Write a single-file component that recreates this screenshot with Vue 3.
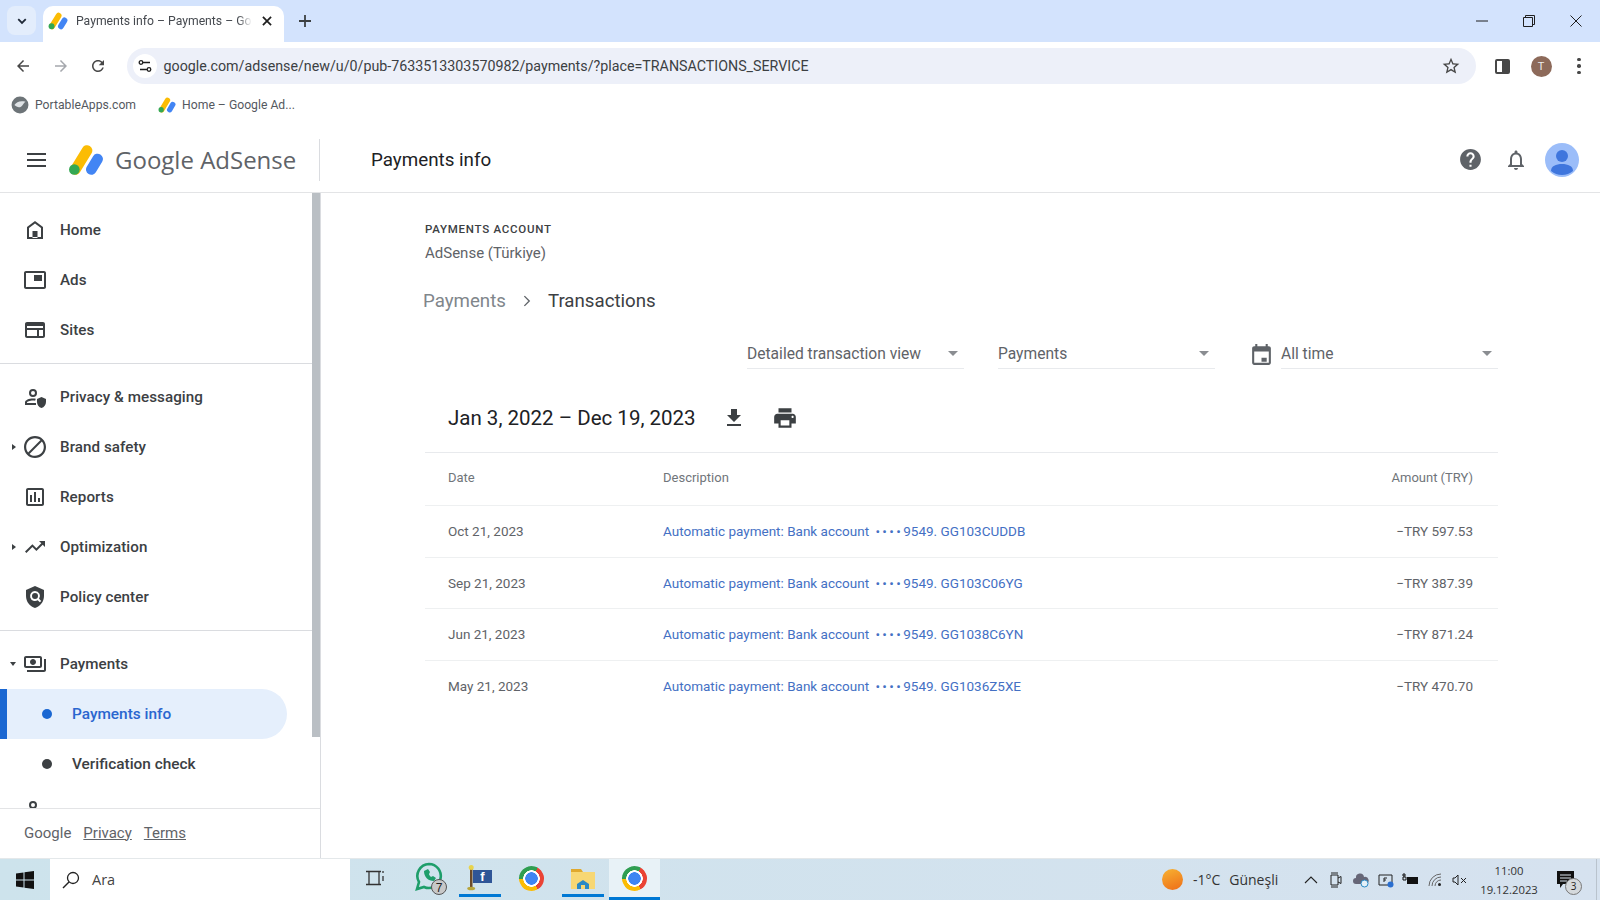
<script setup>
const icons = {
  home: 'M12 3 4 9v12h16V9l-8-6zm6 16H6v-9l6-4.5 6 4.5v9zM9.500 13h5v7h-5z',
  ads: 'M21 3H3c-1.1 0-2 .9-2 2v14c0 1.1.9 2 2 2h18c1.1 0 2-.9 2-2V5c0-1.1-.9-2-2-2zm0 16H3V5h18v14zM11 7h8v6h-8V7z',
  sites: 'M20 4H4c-1.1 0-2 .9-2 2v12c0 1.1.9 2 2 2h16c1.1 0 2-.9 2-2V6c0-1.1-.9-2-2-2zM4 18v-6h10v6H4zm12 0v-6h4v6h-4zM4 10V8h16v2H4z',
  privacy: 'M10 4a4 4 0 1 0 0 8 4 4 0 0 0 0-8zm0 2a2 2 0 1 1 0 4 2 2 0 0 1 0-4zM2 20v-2.5C2 15 6 13.5 10 13.5c1 0 1.900.1 2.800.3l-.7 1.900C11.400 15.600 10.700 15.500 10 15.500c-3.300 0-6 1.100-6 2v.5h9v2H2zM18.500 12l-4.500 2v3c0 2.800 1.900 5.300 4.500 6 2.600-.7 4.500-3.200 4.500-6v-3l-4.500-2z',
  block: 'M12 1C5.900 1 1 5.900 1 12s4.900 11 11 11 11-4.900 11-11S18.100 1 12 1zM3.200 12c0-4.900 3.900-8.800 8.800-8.800 2.100 0 4 .7 5.500 1.900L5.100 17.500C3.900 16 3.200 14.100 3.200 12zm8.800 8.800c-2.100 0-4-.7-5.500-1.900L18.900 6.500c1.200 1.500 1.900 3.400 1.900 5.500 0 4.900-3.900 8.800-8.800 8.800z',
  reports: 'M19 3H5c-1.100 0-2 .9-2 2v14c0 1.100.9 2 2 2h14c1.100 0 2-.9 2-2V5c0-1.100-.9-2-2-2zm0 16H5V5h14v14zM7 10h2v7H7v-7zm4-3h2v10h-2V7zm4 6h2v4h-2v-4z',
  trend: 'M16 6l2.290 2.290-4.880 4.880-4-4L2 16.590 3.410 18l6-6 4 4 6.300-6.290L22 12V6z',
  policy: 'M12 1 3 5v6c0 5.550 3.840 10.740 9 12 5.160-1.260 9-6.450 9-12V5l-9-4zm0 5a5 5 0 0 1 4.100 7.860l2.100 2.100-1.400 1.400-2.100-2.100A5 5 0 1 1 12 6zm0 2a3 3 0 1 0 0 6 3 3 0 0 0 0-6z',
  payments: 'M19 14V6c0-1.100-.9-2-2-2H3c-1.100 0-2 .9-2 2v8c0 1.100.9 2 2 2h14c1.100 0 2-.9 2-2zm-2 0H3V6h14v8zm-7-7c-1.660 0-3 1.340-3 3s1.340 3 3 3 3-1.340 3-3-1.340-3-3-3zm13 0v11c0 1.100-.9 2-2 2H4v-2h17V7h2z',
}

const navGroups = [
  [
    { label: 'Home', icon: 'home' },
    { label: 'Ads', icon: 'ads' },
    { label: 'Sites', icon: 'sites' },
  ],
  [
    { label: 'Privacy & messaging', icon: 'privacy' },
    { label: 'Brand safety', icon: 'block', arrow: 'right' },
    { label: 'Reports', icon: 'reports' },
    { label: 'Optimization', icon: 'trend', arrow: 'right' },
    { label: 'Policy center', icon: 'policy' },
  ],
]

const transactions = [
  { date: 'Oct 21, 2023', ref: 'GG103CUDDB', amount: '597.53' },
  { date: 'Sep 21, 2023', ref: 'GG103C06YG', amount: '387.39' },
  { date: 'Jun 21, 2023', ref: 'GG1038C6YN', amount: '871.24' },
  { date: 'May 21, 2023', ref: 'GG1036Z5XE', amount: '470.70' },
]
</script>

<template>
  <div class="page">
    <div class="tabstrip">
      <div class="tab-search">
        <svg viewBox="0 0 24 24" width="18" height="18"><path d="M7 9.500 12 14.500 17 9.500" fill="none" stroke="#1f2937" stroke-width="2.400" /></svg>
      </div>
      <div class="tab">
        <svg viewBox="0 0 34 30" width="20" height="18">
          <line x1="7" y1="24" x2="18" y2="6" stroke="#fbbc04" stroke-width="10" stroke-linecap="round" />
          <line x1="22" y1="24" x2="28" y2="14" stroke="#4285f4" stroke-width="10" stroke-linecap="round" />
          <circle cx="6" cy="24" r="5" fill="#34a853" />
        </svg>
        <span class="tab-title">Payments info – Payments – Go</span>
        <svg viewBox="0 0 24 24" width="14" height="14"><path d="M5 5 19 19M19 5 5 19" stroke="#1f1f1f" stroke-width="3" /></svg>
      </div>
      <svg class="new-tab" viewBox="0 0 24 24" width="18" height="18"><path d="M12 4v16M4 12h16" stroke="#3c4043" stroke-width="2.400" /></svg>
      <div class="window-btns">
        <svg viewBox="0 0 12 12" width="12" height="12"><path d="M0 6h12" stroke="#1f1f1f" /></svg>
        <svg viewBox="0 0 12 12" width="12" height="12"><path d="M.5 2.500h9v9h-9zM2.500 2.500v-2h9v9h-2" fill="none" stroke="#1f1f1f" /></svg>
        <svg viewBox="0 0 12 12" width="12" height="12"><path d="M.5.5l11 11M11.500.5l-11 11" stroke="#1f1f1f" /></svg>
      </div>
    </div>

    <div class="toolbar">
      <svg viewBox="0 0 24 24" width="18" height="18"><path fill="#474747" d="M20 11H7.830l5.590-5.590L12 4l-8 8 8 8 1.410-1.410L7.830 13H20v-2z" /></svg>
      <svg viewBox="0 0 24 24" width="18" height="18"><path fill="#a5a8ad" d="M4 11h12.170l-5.590-5.590L12 4l8 8-8 8-1.410-1.410L16.170 13H4v-2z" /></svg>
      <svg viewBox="0 0 24 24" width="18" height="18"><path fill="#474747" d="M17.650 6.350C16.200 4.900 14.210 4 12 4c-4.420 0-7.990 3.580-7.990 8s3.570 8 7.990 8c3.730 0 6.840-2.550 7.730-6h-2.080c-.82 2.330-3.040 4-5.650 4-3.310 0-6-2.690-6-6s2.690-6 6-6c1.660 0 3.140.69 4.220 1.780L13 11h7V4l-2.350 2.350z" /></svg>
      <div class="omnibox">
        <div class="site-info">
          <svg viewBox="0 0 16 16" width="16" height="16"><path d="M3 4.500h10M3 11.500h10" stroke="#1f1f1f" stroke-width="1.500" /><circle cx="4" cy="4.500" r="1.800" fill="#fff" stroke="#1f1f1f" stroke-width="1.300" /><circle cx="12" cy="11.500" r="1.800" fill="#fff" stroke="#1f1f1f" stroke-width="1.300" /></svg>
        </div>
        <span class="url">google.com/adsense/new/u/0/pub-7633513303570982/payments/?place=TRANSACTIONS_SERVICE</span>
        <svg viewBox="0 0 24 24" width="20" height="20"><path fill="#474747" d="M22 9.240l-7.190-.62L12 2 9.190 8.630 2 9.240l5.460 4.730L5.820 21 12 17.270 18.180 21l-1.630-7.030L22 9.240zM12 15.400l-3.760 2.270 1-4.280-3.320-2.880 4.380-.38L12 6.100l1.710 4.040 4.380.38-3.320 2.880 1 4.280L12 15.400z" /></svg>
      </div>
      <div class="side-panel"><span></span></div>
      <div class="profile">T</div>
      <div class="dots"><i></i><i></i><i></i></div>
    </div>

    <div class="bookmarks">
      <div class="bookmark">
        <svg viewBox="0 0 16 16" width="18" height="18"><circle cx="8" cy="8" r="7.500" fill="#6d7478" /><path d="M3 8c2-3 5-4 10-3-2 1-3 5-6 5-1 0-3-1-4-2z" fill="#dfe3e6" /></svg>
        <span>PortableApps.com</span>
      </div>
      <div class="bookmark">
        <svg viewBox="0 0 34 30" width="18" height="16">
          <line x1="7" y1="24" x2="18" y2="6" stroke="#fbbc04" stroke-width="10" stroke-linecap="round" />
          <line x1="22" y1="24" x2="28" y2="14" stroke="#4285f4" stroke-width="10" stroke-linecap="round" />
          <circle cx="6" cy="24" r="5" fill="#34a853" />
        </svg>
        <span>Home – Google Ad...</span>
      </div>
    </div>

    <header class="app-header">
      <div class="brand">
        <div class="hamburger"><i></i><i></i><i></i></div>
        <svg viewBox="0 0 34 30" width="36" height="32">
          <line x1="7" y1="24" x2="18" y2="6" stroke="#fbbc04" stroke-width="10" stroke-linecap="round" />
          <line x1="22" y1="24" x2="28" y2="14" stroke="#4285f4" stroke-width="10" stroke-linecap="round" />
          <circle cx="6" cy="24" r="5" fill="#34a853" />
        </svg>
        <span class="brand-name">Google AdSense</span>
      </div>
      <h1 class="page-title">Payments info</h1>
      <div class="header-actions">
        <svg viewBox="0 0 24 24" width="25" height="25"><path fill="#5f6368" d="M12 2C6.480 2 2 6.480 2 12s4.480 10 10 10 10-4.480 10-10S17.520 2 12 2zm1 17h-2v-2h2v2zm2.070-7.750l-.9.920C13.450 12.900 13 13.500 13 15h-2v-.5c0-1.100.45-2.100 1.170-2.830l1.240-1.260c.37-.36.59-.86.59-1.410 0-1.100-.9-2-2-2s-2 .9-2 2H8c0-2.210 1.790-4 4-4s4 1.790 4 4c0 .88-.36 1.680-.93 2.250z" /></svg>
        <svg viewBox="0 0 24 24" width="24" height="24"><path fill="#5f6368" d="M12 22c1.100 0 2-.9 2-2h-4c0 1.100.9 2 2 2zm6-6v-5c0-3.070-1.630-5.640-4.500-6.320V4c0-.83-.67-1.500-1.500-1.500s-1.500.67-1.500 1.500v.68C7.640 5.360 6 7.920 6 11v5l-2 2v1h16v-1l-2-2zm-2 1H8v-6c0-2.480 1.510-4.500 4-4.500s4 2.020 4 4.500v6z" /></svg>
        <svg class="avatar" viewBox="0 0 34 34" width="34" height="34">
          <circle cx="17" cy="17" r="17" fill="#9bbdf9" />
          <circle cx="17" cy="13" r="6" fill="#3f76dd" />
          <path d="M6 28c0-5 5-7 11-7s11 2 11 7a17 17 0 0 1-22 0z" fill="#3f76dd" />
        </svg>
      </div>
    </header>

    <div class="body">
      <aside class="sidebar">
        <div class="nav-wrap">
          <nav class="nav">
            <div v-for="(group, i) in navGroups" :key="i" class="nav-group">
              <div v-for="item in group" :key="item.label" class="nav-item">
                <span v-if="item.arrow" class="caret-right"></span>
                <svg viewBox="0 0 24 24" width="24" height="24"><path fill="#3c4043" :d="icons[item.icon]" /></svg>
                <span>{{ item.label }}</span>
              </div>
            </div>
            <div class="nav-group last">
              <div class="nav-item">
                <span class="caret-down"></span>
                <svg viewBox="0 0 24 24" width="24" height="24"><path fill="#3c4043" :d="icons.payments" /></svg>
                <span>Payments</span>
              </div>
              <div class="nav-sub active"><i></i><span>Payments info</span></div>
              <div class="nav-sub"><i></i><span>Verification check</span></div>
              <div class="nav-item clipped">
                <svg viewBox="0 0 24 24" width="24" height="24"><circle cx="10" cy="8" r="3" fill="none" stroke="#3c4043" stroke-width="2" /></svg>
              </div>
            </div>
          </nav>
          <div class="scroll-track"><div class="scroll-thumb"></div></div>
        </div>
        <footer class="side-footer">
          <span>Google</span>
          <a>Privacy</a>
          <a>Terms</a>
        </footer>
      </aside>

      <main class="main">
        <div class="account-label">PAYMENTS ACCOUNT</div>
        <div class="account-name">AdSense (Türkiye)</div>
        <div class="crumbs">
          <span class="crumb-parent">Payments</span>
          <svg viewBox="0 0 24 24" width="18" height="18"><path d="M8.500 5.500 15 12l-6.500 6.500" fill="none" stroke="#5f6368" stroke-width="1.800" /></svg>
          <span class="crumb-current">Transactions</span>
        </div>
        <div class="filters">
          <div class="select"><span>Detailed transaction view</span><i class="select-caret"></i></div>
          <div class="select"><span>Payments</span><i class="select-caret"></i></div>
          <div class="date-filter">
            <svg viewBox="0 0 24 24" width="25" height="25"><path fill="#5f6368" d="M19 4h-1V2h-2v2H8V2H6v2H5c-1.100 0-2 .9-2 2v14c0 1.100.9 2 2 2h14c1.100 0 2-.9 2-2V6c0-1.100-.9-2-2-2zm0 16H5V9h14v11zm-2-5h-5v4h5z" /></svg>
            <div class="select"><span>All time</span><i class="select-caret"></i></div>
          </div>
        </div>
        <div class="range">
          <h2>Jan 3, 2022 – Dec 19, 2023</h2>
          <svg viewBox="0 0 24 24" width="24" height="24"><path fill="#3c4043" d="M19 9h-4V3H9v6H5l7 7 7-7zM5 18v2h14v-2H5z" /></svg>
          <svg viewBox="0 0 24 24" width="26" height="26"><path fill="#3c4043" d="M19 8H5c-1.660 0-3 1.340-3 3v6h4v4h12v-4h4v-6c0-1.660-1.340-3-3-3zm-3 11H8v-5h8v5zm3-7c-.55 0-1-.45-1-1s.45-1 1-1 1 .45 1 1-.45 1-1 1zm-1-9H6v4h12V3z" /></svg>
        </div>
        <div class="table">
          <div class="row head">
            <span>Date</span>
            <span>Description</span>
            <span class="amount">Amount (TRY)</span>
          </div>
          <div v-for="t in transactions" :key="t.ref" class="row">
            <span>{{ t.date }}</span>
            <a class="desc">Automatic payment: Bank account <b>••••</b>9549. {{ t.ref }}</a>
            <span class="amount">−TRY {{ t.amount }}</span>
          </div>
        </div>
      </main>
    </div>

    <div class="taskbar">
      <div class="start">
        <svg viewBox="0 0 18 18" width="18" height="18"><path fill="#111" d="M0 2.500 7.500 1.500v7H0zM8.500 1.300 18 0v8.500H8.500zM0 9.500h7.500v7L0 15.500zM8.500 9.500H18V18l-9.500-1.300z" /></svg>
      </div>
      <div class="search">
        <svg viewBox="0 0 20 20" width="20" height="20"><circle cx="12" cy="8" r="5.500" fill="none" stroke="#222" stroke-width="1.300" /><path d="M8 12 2 18" stroke="#222" stroke-width="1.500" /></svg>
        <span>Ara</span>
      </div>
      <div class="task-icons">
        <div class="task view">
          <svg viewBox="0 0 20 20" width="20" height="20"><path d="M4 3.500h10v13H4zM1 3.500h15M1 16.500h15M18 3v2M18 8v5" fill="none" stroke="#333" stroke-width="1.300" /></svg>
        </div>
        <div class="task chat">
          <svg viewBox="0 0 34 34" width="34" height="34">
            <path d="M15 3a12 12 0 0 0-10 18l-2 7 7-2a12 12 0 1 0 5-23z" fill="none" stroke="#1e9e6a" stroke-width="2.600" />
            <path d="M10 10c0 6 4 10 10 10l2-3-3-2-2 1c-1-1-2-2-2-3l1-2-2-3z" fill="#1e9e6a" />
            <circle cx="25" cy="26" r="7.500" fill="#c8c8c8" stroke="#555" />
            <text x="25" y="30.500" class="badge-num">7</text>
          </svg>
        </div>
        <div class="task running">
          <svg viewBox="0 0 26 28" width="26" height="28">
            <rect x="3" y="3" width="2.500" height="21" fill="#6b4a2a" />
            <circle cx="4.200" cy="3.500" r="2.500" fill="#e8d44d" />
            <ellipse cx="4.200" cy="24.500" rx="4" ry="1.800" fill="#b7a53a" />
            <rect x="6" y="6" width="19" height="13" fill="#2f5597" />
            <text x="15.500" y="17" class="flag-f">f</text>
          </svg>
        </div>
        <div class="task"><div class="chrome"></div></div>
        <div class="task running">
          <svg viewBox="0 0 26 24" width="26" height="24">
            <path d="M1 3h10l2 3H1z" fill="#e0a92e" />
            <rect x="1" y="6" width="24" height="17" fill="#f7d774" />
            <path d="M7 23v-5l6-4 6 4v5z" fill="#2a8ac6" />
            <rect x="11" y="19" width="4" height="4" fill="#f7d774" />
          </svg>
        </div>
        <div class="task running current"><div class="chrome"></div></div>
      </div>
      <div class="tray">
        <div class="weather"></div>
        <span class="temp">-1°C</span>
        <span class="temp name">Güneşli</span>
        <div class="tray-icons">
          <svg viewBox="0 0 16 16" width="16" height="16"><path d="M2 11 8 5l6 6" fill="none" stroke="#222" stroke-width="1.100" /></svg>
          <svg viewBox="0 0 16 16" width="16" height="16"><path d="M3 3h7v10H3zM10 6l3-1.500v7L10 10M3 1h7M3 15h7" fill="none" stroke="#222" /></svg>
          <svg viewBox="0 0 16 16" width="16" height="16"><path d="M3 12a3 3 0 0 1 0-6 4 4 0 0 1 8-1 3.500 3.500 0 0 1 2 7z" fill="#667" /><circle cx="11.500" cy="11.500" r="3.500" fill="#e4f0f8" stroke="#2a8ac6" /></svg>
          <svg viewBox="0 0 16 16" width="16" height="16"><path d="M1 3h13v10H1z" fill="none" stroke="#222" /><path d="M6 10V6h3M6 8h2" fill="none" stroke="#222" /><circle cx="12.500" cy="12.500" r="3" fill="#2a6fd0" /></svg>
          <svg viewBox="0 0 16 16" width="16" height="16"><path d="M5 5h11v7H5z" fill="#111" /><path d="M0 3h4M2 1v4M1 5h3v3H1z" fill="none" stroke="#111" /></svg>
          <svg viewBox="0 0 16 16" width="16" height="16"><path d="M2 14A12 12 0 0 1 14 2M5 14a9 9 0 0 1 9-9M8 14a6 6 0 0 1 6-6" fill="none" stroke="#666" /><circle cx="12.500" cy="12.500" r="1.500" fill="#222" /></svg>
          <svg viewBox="0 0 16 16" width="16" height="16"><path d="M1 6h2l3-3v10l-3-3H1zM9 6l5 5M14 6l-5 5" fill="none" stroke="#222" /></svg>
        </div>
        <div class="clock"><span>11:00</span><span>19.12.2023</span></div>
        <div class="notif">
          <svg viewBox="0 0 18 18" width="18" height="18"><path d="M0 0h17v13H6l-3 4v-4H0z" fill="#111" /><path d="M3 4h11M3 7h11M3 10h7" stroke="#dbe5ef" /></svg>
          <span class="notif-badge">3</span>
        </div>
      </div>
    </div>
  </div>
</template>

<style scoped>
.page {
  width: 1600px;
  height: 900px;
  display: flex;
  flex-direction: column;
  overflow: hidden;
  background: #fff;
  font-family: Roboto, "Liberation Sans", sans-serif;
  color: #3c4043;
}

/* browser chrome */
.tabstrip {
  height: 42px;
  flex: none;
  display: flex;
  align-items: flex-end;
  background: #d3e3fd;
}
.tab-search {
  width: 29px;
  height: 29px;
  margin: 0 7px 7px;
  border-radius: 8px;
  background: #e3edfc;
  display: flex;
  align-items: center;
  justify-content: center;
}
.tab {
  width: 241px;
  height: 36px;
  box-sizing: border-box;
  padding: 0 10px 6px 5px;
  display: flex;
  align-items: center;
  gap: 8px;
  background: #fff;
  border-radius: 10px 10px 0 0;
}
.tab-title {
  flex: 1;
  min-width: 0;
  white-space: nowrap;
  font-size: 12.2px;
  color: #45494f;
  -webkit-mask-image: linear-gradient(90deg, #000 92%, transparent);
  mask-image: linear-gradient(90deg, #000 92%, transparent);
}
.new-tab {
  margin: 0 0 12px 12px;
}
.window-btns {
  margin-left: auto;
  height: 42px;
  padding-right: 18px;
  display: flex;
  align-items: center;
  gap: 35px;
}
.toolbar {
  height: 48px;
  flex: none;
  box-sizing: border-box;
  padding-left: 14px;
  display: flex;
  align-items: center;
  gap: 19.5px;
}
.omnibox {
  width: 1349px;
  height: 36px;
  flex: none;
  box-sizing: border-box;
  padding: 0 15px 0 6px;
  display: flex;
  align-items: center;
  background: #edf0f9;
  border-radius: 18px;
}
.site-info {
  width: 24px;
  height: 24px;
  border-radius: 50%;
  background: #fff;
  display: flex;
  align-items: center;
  justify-content: center;
}
.url {
  flex: 1;
  margin-left: 7px;
  font-size: 14.25px;
  color: #3c4043;
}
.side-panel {
  width: 15px;
  height: 15px;
  flex: none;
  box-sizing: border-box;
  border: 2px solid #474747;
  border-radius: 2px;
  display: flex;
  justify-content: flex-end;
}
.side-panel span {
  width: 6px;
  background: #474747;
}
.profile {
  width: 21px;
  height: 21px;
  flex: none;
  margin-left: 1px;
  border-radius: 50%;
  background: #8d6a5a;
  color: #eee;
  font-size: 11px;
  display: flex;
  align-items: center;
  justify-content: center;
}
.dots {
  display: flex;
  flex-direction: column;
  gap: 3px;
  margin-left: 6px;
}
.dots i {
  width: 3.5px;
  height: 3.5px;
  border-radius: 50%;
  background: #474747;
}
.bookmarks {
  height: 35px;
  flex: none;
  box-sizing: border-box;
  padding: 0 0 6px 11px;
  display: flex;
  align-items: center;
  gap: 22px;
}
.bookmark {
  display: flex;
  align-items: center;
  gap: 6px;
  font-size: 12.2px;
  color: #55595f;
}

/* adsense header */
.app-header {
  height: 68px;
  flex: none;
  box-sizing: border-box;
  padding-top: 2px;
  display: flex;
  align-items: center;
  border-bottom: 1px solid #e3e4e6;
}
.brand {
  width: 320px;
  height: 42px;
  flex: none;
  box-sizing: border-box;
  padding-left: 27px;
  display: flex;
  align-items: center;
  border-right: 1px solid #dadce0;
}
.hamburger {
  width: 19px;
  display: flex;
  flex-direction: column;
  gap: 4px;
  margin-right: 22px;
}
.hamburger i {
  height: 2px;
  background: #3c4043;
}
.brand-name {
  margin-left: 11px;
  font-family: "Open Sans", sans-serif;
  font-size: 24px;
  color: #5f6368;
}
.page-title {
  margin: 0 0 0 51px;
  font-size: 18.8px;
  font-weight: 400;
  color: #202124;
}
.header-actions {
  margin-left: auto;
  margin-right: 21px;
  display: flex;
  align-items: center;
  gap: 21px;
}
.avatar {
  margin-left: -4px;
}

/* sidebar */
.body {
  flex: 1;
  min-height: 0;
  display: flex;
}
.sidebar {
  width: 321px;
  flex: none;
  box-sizing: border-box;
  display: flex;
  flex-direction: column;
  border-right: 1px solid #dadce0;
}
.nav-wrap {
  height: 615px;
  flex: none;
  display: flex;
  overflow: hidden;
  border-bottom: 1px solid #e3e4e6;
}
.nav {
  flex: 1;
  min-width: 0;
}
.nav-group {
  padding: 12px 0 8px;
  border-bottom: 1px solid #dadce0;
}
.nav-group + .nav-group {
  padding: 8px 0;
}
.nav-group.last {
  border-bottom: 0;
}
.nav-item {
  position: relative;
  height: 50px;
  padding-left: 23px;
  display: flex;
  align-items: center;
  gap: 13px;
  font-size: 15.2px;
  font-weight: 500;
  letter-spacing: .05px;
  color: #3c4043;
}
.nav-item.clipped {
  height: 40px;
}
.caret-right {
  position: absolute;
  left: 12px;
  border-left: 4px solid #3c4043;
  border-top: 3.5px solid transparent;
  border-bottom: 3.5px solid transparent;
}
.caret-down {
  position: absolute;
  left: 10px;
  border-top: 4px solid #3c4043;
  border-left: 3.5px solid transparent;
  border-right: 3.5px solid transparent;
}
.nav-sub {
  width: 287px;
  height: 50px;
  box-sizing: border-box;
  padding-left: 41px;
  display: flex;
  align-items: center;
  gap: 20px;
  font-size: 15.4px;
  font-weight: 500;
  border-left: 7px solid transparent;
  border-radius: 0 25px 25px 0;
}
.nav-sub i {
  width: 10px;
  height: 10px;
  margin-left: -6px;
  border-radius: 50%;
  background: #3c4043;
}
.nav-sub.active {
  background: #e5effc;
  border-left-color: #1a67d2;
  color: #2a66cf;
}
.nav-sub.active i {
  background: #1a67d2;
}
.scroll-track {
  width: 8px;
  flex: none;
}
.scroll-thumb {
  height: 544px;
  background: #babfc4;
}
.side-footer {
  height: 50px;
  flex: none;
  box-sizing: border-box;
  padding: 0 0 3px 24px;
  display: flex;
  align-items: center;
  gap: 12px;
  font-size: 15px;
  color: #5f6368;
}
.side-footer a {
  text-decoration: underline;
}

/* main column */
.main {
  flex: 1;
  min-width: 0;
  box-sizing: border-box;
  padding: 29px 102px 0 104px;
}
.account-label {
  font-size: 11.5px;
  font-weight: 500;
  letter-spacing: .75px;
  line-height: 14px;
  color: #3c4043;
}
.account-name {
  margin-top: 8px;
  font-size: 15px;
  line-height: 18px;
  color: #5f6368;
}
.crumbs {
  margin: 25px 0 0 -2px;
  height: 28px;
  display: flex;
  align-items: center;
  gap: 12px;
  font-size: 18.7px;
}
.crumb-parent {
  color: #80868b;
}
.crumb-current {
  color: #3c4043;
}
.filters {
  margin-top: 24px;
  height: 30px;
  display: flex;
  justify-content: flex-end;
  align-items: center;
  gap: 34px;
}
.select {
  width: 217px;
  height: 30px;
  box-sizing: border-box;
  padding-right: 6px;
  display: flex;
  align-items: center;
  justify-content: space-between;
  font-size: 15.6px;
  color: #5f6368;
  border-bottom: 1px solid #e8eaed;
}
.select-caret {
  border-top: 5px solid #8a8d91;
  border-left: 5px solid transparent;
  border-right: 5px solid transparent;
}
.date-filter {
  display: flex;
  align-items: center;
  gap: 7px;
}
.range {
  margin-top: 15px;
  height: 68px;
  padding-left: 23px;
  display: flex;
  align-items: center;
  gap: 26px;
}
.range h2 {
  margin: 0;
  font-size: 20.5px;
  font-weight: 400;
  color: #202124;
}
.table {
  border-top: 1px solid #e8eaed;
}
.row {
  height: 51.7px;
  box-sizing: border-box;
  padding: 0 25px 1px 23px;
  display: grid;
  grid-template-columns: 215px 1fr auto;
  align-items: center;
  font-size: 13.5px;
  color: #5f6368;
  border-bottom: 1px solid #eef0f1;
}
.row:last-child {
  border-bottom: 0;
}
.row.head {
  height: 53px;
  padding-bottom: 3px;
  font-size: 13px;
  color: #70757a;
}
.desc {
  color: #4470c4;
  white-space: pre-wrap;
}
.desc b {
  margin-left: 3px;
  font-weight: 400;
  letter-spacing: 2.4px;
}
.amount {
  text-align: right;
}

/* windows taskbar */
.taskbar {
  height: 42px;
  flex: none;
  display: flex;
  align-items: stretch;
  background: linear-gradient(90deg, #cde3ec, #d6e2ef);
  border-top: 1px solid #e4e8ea;
  box-sizing: border-box;
  font-family: "Open Sans", sans-serif;
}
.start {
  width: 50px;
  display: flex;
  align-items: center;
  justify-content: center;
}
.search {
  width: 300px;
  box-sizing: border-box;
  padding-left: 11px;
  display: flex;
  align-items: center;
  gap: 11px;
  background: #fff;
  font-size: 14.5px;
  color: #444;
}
.task-icons {
  display: flex;
  padding-left: 1px;
}
.task {
  width: 51.5px;
  display: flex;
  align-items: center;
  justify-content: center;
  box-sizing: border-box;
  border-bottom: 3px solid transparent;
}
.task.view svg {
  margin-left: -4px;
}
.task.chat svg {
  margin-left: 5px;
}
.task.running {
  background: linear-gradient(#0000 92%, #0078d4 92%);
  background-size: 42px 100%;
  background-repeat: no-repeat;
  background-position: center;
}
.task.running.current {
  background: #e8f2f7;
  border-bottom-color: #0078d4;
}
.chrome {
  width: 25px;
  height: 25px;
  border-radius: 50%;
  background:
    radial-gradient(circle, #3f85f2 0 6px, #fff 6.5px 8px, transparent 8.5px),
    conic-gradient(from 60deg, #ea4335 0 120deg, #fbbc04 0 240deg, #2f9e51 0);
  transform: rotate(-30deg);
}
.badge-num {
  font-size: 12px;
  text-anchor: middle;
  fill: #222;
  font-family: "Liberation Sans", sans-serif;
}
.flag-f {
  font-size: 13px;
  font-weight: 700;
  text-anchor: middle;
  fill: #fff;
  font-family: "Liberation Sans", sans-serif;
}
.tray {
  margin-left: auto;
  margin-right: 3px;
  display: flex;
  align-items: center;
  border-right: 1px solid #b9c3cd;
  position: relative;
}
.weather {
  width: 21px;
  height: 21px;
  margin-right: 10px;
  border-radius: 50%;
  background: linear-gradient(160deg, #f7b232, #ee6d18);
}
.temp {
  font-size: 14px;
  color: #333;
  margin-right: 9px;
}
.temp.name {
  font-size: 14px;
  margin-right: 25px;
}
.tray-icons {
  display: flex;
  align-items: center;
  gap: 8.8px;
}
.clock {
  width: 82px;
  display: flex;
  flex-direction: column;
  align-items: center;
  font-size: 11.3px;
  line-height: 19px;
  color: #333;
}
.notif {
  position: relative;
  width: 46px;
  padding-left: 7px;
  box-sizing: border-box;
  display: flex;
  align-items: center;
}
.notif-badge {
  position: absolute;
  left: 15px;
  top: 7px;
  width: 15px;
  height: 15px;
  border-radius: 50%;
  background: #d5d9dc;
  border: 1px solid #777;
  font-size: 10px;
  line-height: 15px;
  text-align: center;
  color: #222;
}
</style>
